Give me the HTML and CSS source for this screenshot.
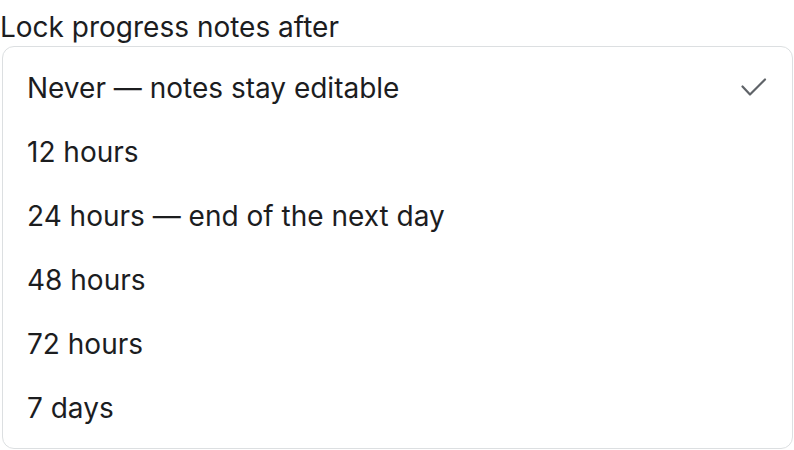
FILE: index.html
```html
<!DOCTYPE html>
<html>

<head>
  <meta charset="UTF-8">
  <meta name="viewport" content="width=device-width, initial-scale=1.0">
  <title>Lock progress notes</title>
  <link rel="stylesheet" href="styles.css">
</head>

<body>
  <div class="field">
    <div class="label">Lock progress notes after</div>
    <ul class="menu">
      <li class="option selected">
        <span>Never — notes stay editable</span>
        <svg class="check" width="26" height="20" viewBox="0 0 26 20" fill="none" stroke="currentColor" stroke-width="2.2" stroke-linecap="round" stroke-linejoin="round">
          <path d="M1.5 8.5L9 16.5L24 1.5"/>
        </svg>
      </li>
      <li class="option"><span>12 hours</span></li>
      <li class="option"><span>24 hours — end of the next day</span></li>
      <li class="option"><span>48 hours</span></li>
      <li class="option"><span>72 hours</span></li>
      <li class="option"><span>7 days</span></li>
    </ul>
  </div>
</body>

</html>
```

FILE: styles.css
```css
* {
  box-sizing: border-box;
}

body {
  margin: 0;
  font-family: Inter, "Noto Sans", sans-serif;
  background: #ffffff;
  color: #1c1d1f;
}

.field {
  padding: 9px 1px 0 0;
}

.label {
  font-size: 28px;
  line-height: 36px;
  margin-bottom: 1px;
}

.menu {
  list-style: none;
  margin: 0 0 0 2px;
  padding: 9px 0 8px;
  border: 1.5px solid #dcdfe1;
  border-radius: 12px;
  background: #ffffff;
}

.option {
  display: flex;
  align-items: center;
  justify-content: space-between;
  height: 64px;
  padding: 0 25px 0 24px;
  font-size: 28px;
}

.check {
  color: #5f6368;
}
```
